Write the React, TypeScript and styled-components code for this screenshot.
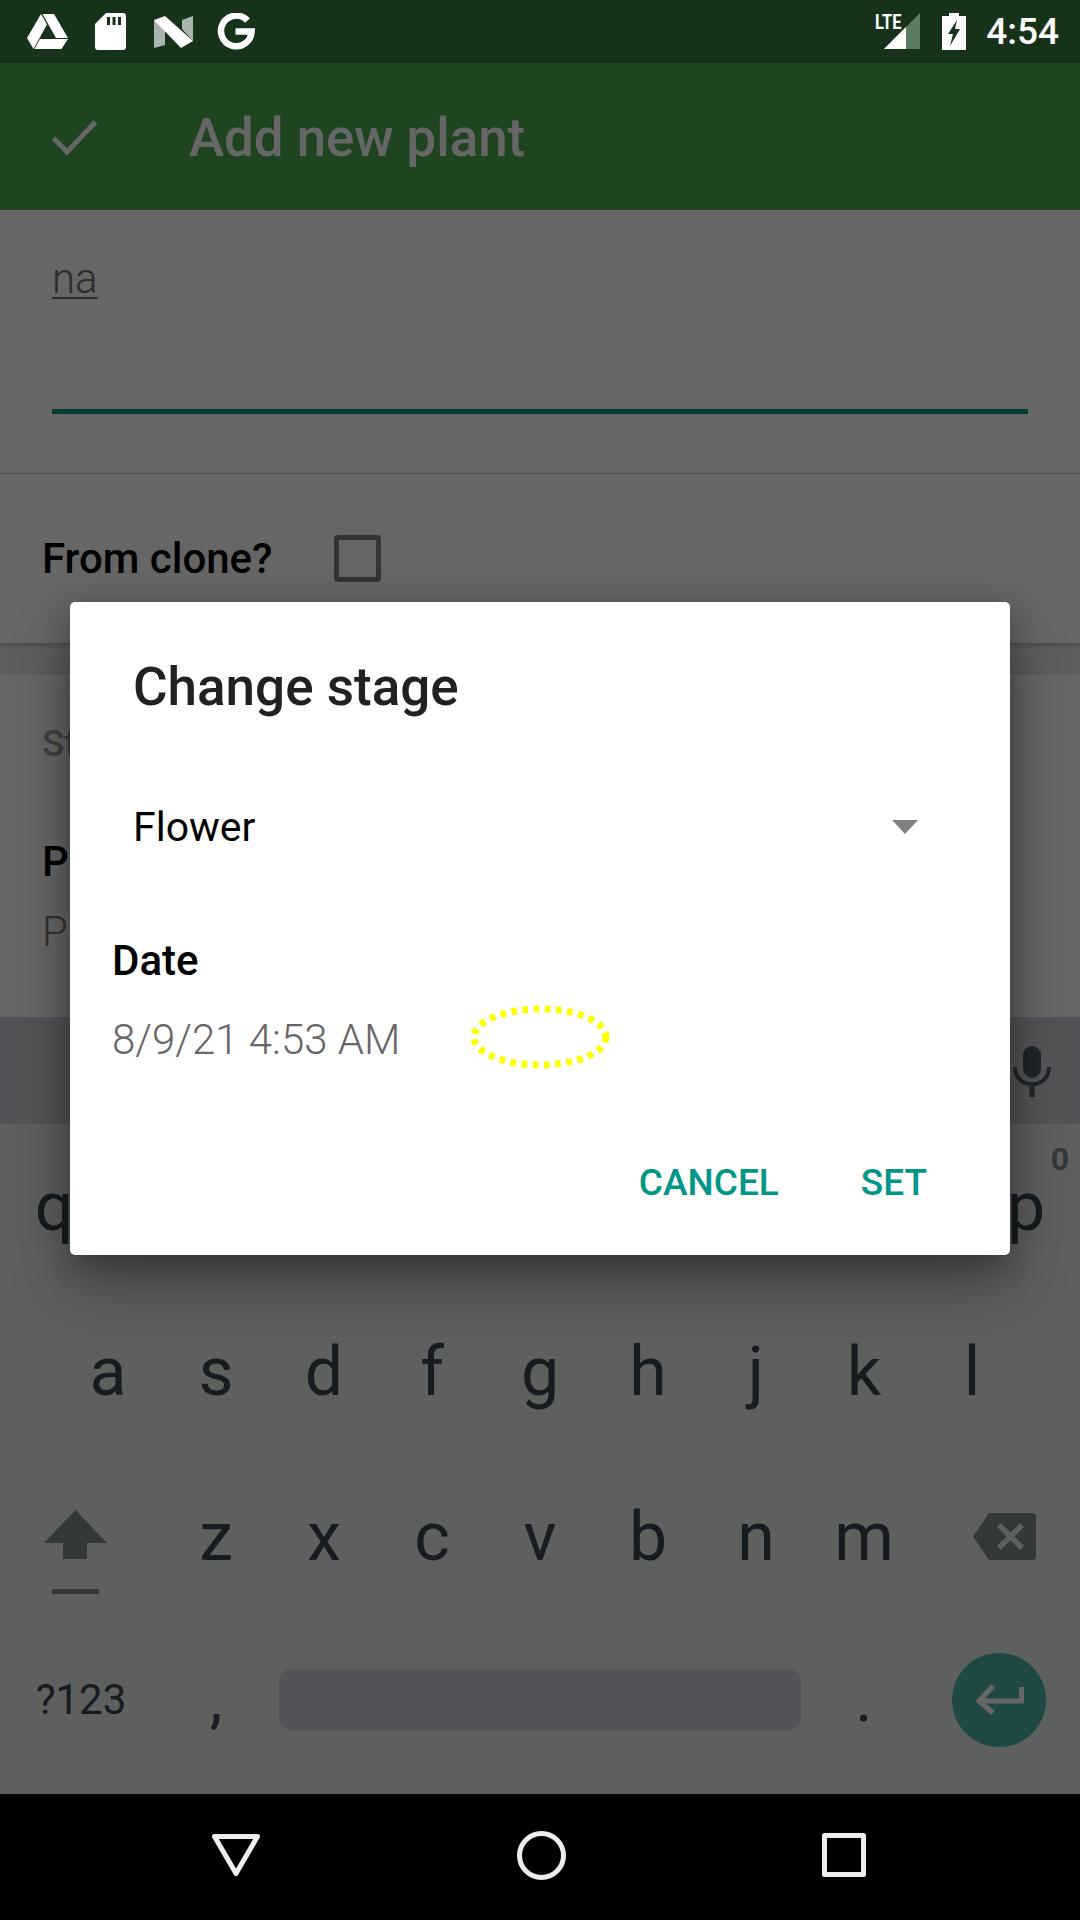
import React from 'react';
import styled, { createGlobalStyle } from 'styled-components';

const Global = createGlobalStyle`
    html, body {
        margin: 0;
        padding: 0;
        background: #000;
    }
    * {
        box-sizing: border-box;
    }
`;

const Screen = styled.div`
    width: 1080px;
    height: 1920px;
    display: flex;
    flex-direction: column;
    overflow: hidden;
    font-family: Roboto, "Liberation Sans", sans-serif;
`;

const StatusBar = styled.div`
    height: 63px;
    flex: none;
    display: flex;
    align-items: center;
    justify-content: space-between;
    padding: 0 21px 0 27px;
    background: #16331a;
`;

const StatusGroup = styled.div`
    display: flex;
    align-items: center;
`;

const StatusIcon = styled.svg<{ $gap?: number }>`
    display: block;
    margin-left: ${props => props.$gap || 0}px;
`;

const SignalWrap = styled.div`
    position: relative;
    width: 45px;
    height: 37px;
`;

const Lte = styled.span`
    position: absolute;
    left: 0;
    top: -1px;
    font-size: 21px;
    line-height: 21px;
    font-weight: 700;
    color: #fff;
    transform: scaleX(0.78);
    transform-origin: left center;
`;

const Clock = styled.span`
    margin-left: 20px;
    font-size: 37px;
    font-weight: 500;
    color: #fff;
`;

const Main = styled.div`
    position: relative;
    flex: 1;
    min-height: 0;
    display: flex;
    flex-direction: column;
    background: #fff;
`;

const Toolbar = styled.div`
    height: 147px;
    flex: none;
    display: flex;
    align-items: center;
    padding: 3px 0 0 52px;
    background: #4caa50;
    color: #fff;
`;

const Title = styled.h1`
    margin: 0 0 0 92px;
    font-size: 52.8px;
    font-weight: 500;
`;

const NameSection = styled.div`
    height: 264px;
    flex: none;
    padding: 44px 52px 0;
    border-bottom: 1px solid #d6d6d6;
`;

const NameValue = styled.div`
    display: inline-block;
    font-size: 42px;
    line-height: 50px;
    font-weight: 300;
    color: #707070;
    text-decoration: underline;
    text-decoration-thickness: 2px;
    text-underline-offset: 4px;
`;

const NameLine = styled.div`
    height: 5px;
    margin-top: 105px;
    background: #009688;
`;

const CloneSection = styled.div`
    height: 169px;
    flex: none;
    display: flex;
    align-items: flex-start;
    padding: 61px 0 0 42px;
    box-shadow: 0 2px 5px rgba(0, 0, 0, 0.25);
    position: relative;
`;

const BoldLabel = styled.div`
    font-size: 42px;
    line-height: 48px;
    font-weight: 500;
    color: #000;
`;

const Checkbox = styled.div`
    width: 47px;
    height: 47px;
    margin-left: 61px;
    border: 5px solid #808080;
    border-radius: 4px;
`;

const Band = styled.div`
    height: 31px;
    flex: none;
    background: #ececec;
    border-bottom: 1px solid #d6d6d6;
`;

const StageSection = styled.div`
    flex: 1;
    padding: 48px 0 0 42px;
`;

const StageLabel = styled.div`
    font-size: 37px;
    line-height: 44px;
    font-weight: 500;
    color: #a0a0a0;
`;

const PlainValue = styled.div`
    margin-top: 21px;
    font-size: 42px;
    line-height: 50px;
    font-weight: 300;
    color: #808080;
`;

const PlainLabel = styled(BoldLabel)`
    margin-top: 72px;
`;

const Keyboard = styled.div`
    height: 777px;
    flex: none;
    display: flex;
    flex-direction: column;
    background: #ecf0f0;
    color: #37474f;
`;

const SuggestionStrip = styled.div`
    height: 107px;
    flex: none;
    display: flex;
    justify-content: flex-end;
    align-items: center;
    padding: 2px 29px 0 0;
    background: #cfd2d9;
`;

const KeyRow = styled.div<{ $columns: string }>`
    height: 165px;
    flex: none;
    display: grid;
    grid-template-columns: ${props => props.$columns};
    align-items: center;
    justify-items: center;
`;

const BottomRow = styled(KeyRow)`
    margin-top: -2px;
`;

const Key = styled.div`
    position: relative;
    width: 100%;
    height: 100%;
    display: flex;
    align-items: center;
    justify-content: center;
    font-size: 68px;
    line-height: 80px;
`;

const KeyHint = styled.span`
    position: absolute;
    right: 11px;
    top: 17px;
    font-size: 32px;
    line-height: 36px;
    font-weight: 700;
    color: #808c8c;
`;

const ShiftKey = styled(Key)`
    padding: 31px 11px 0 0;
`;

const DeleteKey = styled(Key)`
    padding-left: 10px;
`;

const ModeKey = styled(Key)`
    font-size: 42px;
`;

const PunctuationKey = styled(Key)`
    font-size: 64px;
`;

const SpaceBar = styled.div`
    width: 522px;
    height: 61px;
    border-radius: 12px;
    background: #cfd2d9;
`;

const EnterButton = styled.div`
    width: 94px;
    height: 94px;
    display: flex;
    align-items: center;
    justify-content: center;
    border-radius: 50%;
    background: #4db6ac;
`;

const Scrim = styled.div`
    position: absolute;
    inset: 0;
    background: rgba(0, 0, 0, 0.6);
`;

const Dialog = styled.div`
    position: absolute;
    left: 70px;
    top: 539px;
    width: 940px;
    height: 653px;
    display: flex;
    flex-direction: column;
    border-radius: 5px;
    background: #fff;
    box-shadow: 0 30px 60px rgba(0, 0, 0, 0.3), 0 10px 30px rgba(0, 0, 0, 0.25);
`;

const DialogTitle = styled.h2`
    margin: 0;
    padding: 55px 63px 0;
    font-size: 53px;
    line-height: 60px;
    font-weight: 500;
    color: #212121;
`;

const SpinnerRow = styled.div`
    display: flex;
    align-items: center;
    justify-content: space-between;
    margin-top: 85px;
    padding: 0 92px 0 63px;
    font-size: 41px;
    line-height: 50px;
    color: #000;
`;

const Caret = styled.div`
    width: 0;
    height: 0;
    border-left: 13px solid transparent;
    border-right: 13px solid transparent;
    border-top: 14px solid #808080;
`;

const DateBlock = styled.div`
    margin-top: 85px;
    padding-left: 42px;
`;

const DateRow = styled.div`
    display: flex;
    align-items: center;
    margin-top: 20px;
`;

const DateValue = styled.div`
    font-size: 42px;
    line-height: 50px;
    font-weight: 300;
    color: #666;
`;

const EllipseMark = styled(StatusIcon)`
    margin-bottom: 5px;
`;

const Actions = styled.div`
    margin-top: auto;
    display: flex;
    justify-content: flex-end;
    gap: 82px;
    padding: 0 83px 50px 0;
`;

const ActionButton = styled.span`
    font-size: 37px;
    line-height: 44px;
    font-weight: 500;
    color: #009688;
`;

const NavBar = styled.div`
    height: 126px;
    flex: none;
    display: flex;
    align-items: center;
    background: #000;
    padding: 0 214px 4px 212px;
    justify-content: space-between;
`;

const DriveIcon = () => (
    <StatusIcon width="41" height="35" viewBox="0 0 41 35" fill="#fff">
        <path d="M14 0 L20 10.5 L6.5 35 L0 24 Z" />
        <path d="M15.5 0 L27 0 L41 24 L29 24 Z" />
        <path d="M13 25 L41 25 L34.5 35 L7.5 35 Z" />
    </StatusIcon>
);

const SdIcon = () => (
    <StatusIcon $gap={27} width="31" height="37" viewBox="0 0 31 37">
        <path fill="#fff" d="M11 0 H28 a3 3 0 0 1 3 3 V34 a3 3 0 0 1 -3 3 H3 a3 3 0 0 1 -3 -3 V11 Z" />
        <path fill="#16331a" d="M12 4 h3 v8 h-3 Z M17.5 4 h3 v8 h-3 Z M23 4 h3 v8 h-3 Z" />
    </StatusIcon>
);

const NougatIcon = () => (
    <StatusIcon $gap={28} width="39" height="32" viewBox="0 0 39 32">
        <path fill="#aab5ad" d="M0 4 L11 10 V29 L0 32 Z" />
        <path fill="#aab5ad" d="M28 4 L39 0 V25 L28 13 Z" />
        <path fill="#fff" d="M0 4 L11 0 L39 25 L27 32 Z" />
    </StatusIcon>
);

const GoogleIcon = () => (
    <StatusIcon $gap={24} width="38" height="37" viewBox="0 0 38 37">
        <path
            fill="none"
            stroke="#fff"
            strokeWidth="6.5"
            d="M30.5 7.5 A15.3 15.3 0 1 0 34.6 18.5 H18.5"
        />
    </StatusIcon>
);

const SignalIcon = () => (
    <SignalWrap>
        <svg width="45" height="37" viewBox="0 0 45 37" style={{ display: 'block' }}>
            <path fill="#5d7a62" d="M45 0 V36 H9 Z" />
            <path fill="#fff" d="M31 14 V36 H9 Z" />
        </svg>
        <Lte>LTE</Lte>
    </SignalWrap>
);

const BatteryIcon = () => (
    <StatusIcon $gap={22} width="24" height="37" viewBox="0 0 24 37">
        <path fill="#fff" d="M7 0 H17 V3 H24 V37 H0 V3 H7 Z" />
        <path fill="#16331a" d="M15 7 L6 21 H11 L8 33 L18 16 H13 Z" />
    </StatusIcon>
);

const ShiftIcon = () => (
    <svg width="63" height="84" viewBox="0 0 63 84">
        <path fill="#808c8c" d="M31.5 0 L63 33 H43 V49 H19 V33 H0 Z" />
        <rect x="8" y="79" width="47" height="5" fill="#808c8c" />
    </svg>
);

const BackspaceIcon = () => (
    <svg width="63" height="47" viewBox="0 0 63 47">
        <path fill="#808c8c" d="M16 0 H59 a4 4 0 0 1 4 4 V43 a4 4 0 0 1 -4 4 H16 L0 23.5 Z" />
        <path stroke="#ecf0f0" strokeWidth="5.5" d="M26 12 L49 35 M49 12 L26 35" />
    </svg>
);

const EnterIcon = () => (
    <svg width="49" height="31" viewBox="0 0 49 31" fill="none" stroke="#fff" strokeWidth="5">
        <path d="M46.5 3 V17 H5" />
        <path d="M18 2 L4 17 L18 29" />
    </svg>
);

const MicIcon = () => (
    <svg width="38" height="51" viewBox="0 0 38 51">
        <rect x="10" y="0" width="18" height="32" rx="9" fill="#546068" />
        <path d="M2 21 C2 44 36 44 36 21" fill="none" stroke="#546068" strokeWidth="4" />
        <rect x="16.5" y="38" width="5" height="13" fill="#546068" />
    </svg>
);

const FocusEllipse = () => (
    <EllipseMark $gap={70} width="140" height="64" viewBox="0 0 140 64">
        <ellipse
            cx="70"
            cy="32"
            rx="66"
            ry="28"
            fill="none"
            stroke="#ffff00"
            strokeWidth="7"
            strokeDasharray="5.5 5.7"
        />
    </EllipseMark>
);

const ROW_TWO = ['a', 's', 'd', 'f', 'g', 'h', 'j', 'k', 'l'];
const ROW_THREE = ['z', 'x', 'c', 'v', 'b', 'n', 'm'];

const App: React.FC = (): JSX.Element => {
    return (
        <Screen>
            <Global />
            <StatusBar>
                <StatusGroup>
                    <DriveIcon />
                    <SdIcon />
                    <NougatIcon />
                    <GoogleIcon />
                </StatusGroup>
                <StatusGroup>
                    <SignalIcon />
                    <BatteryIcon />
                    <Clock>4:54</Clock>
                </StatusGroup>
            </StatusBar>
            <Main>
                <Toolbar>
                    <svg width="45" height="36" viewBox="0 0 45 36" fill="none" stroke="#fff" strokeWidth="5">
                        <path d="M1.5 18 L15 32 L43.5 2" />
                    </svg>
                    <Title>Add new plant</Title>
                </Toolbar>
                <NameSection>
                    <NameValue>na</NameValue>
                    <NameLine />
                </NameSection>
                <CloneSection>
                    <BoldLabel>From clone?</BoldLabel>
                    <Checkbox />
                </CloneSection>
                <Band />
                <StageSection>
                    <StageLabel>St</StageLabel>
                    <PlainLabel>P</PlainLabel>
                    <PlainValue>P</PlainValue>
                </StageSection>
                <Keyboard>
                    <SuggestionStrip>
                        <MicIcon />
                    </SuggestionStrip>
                    <KeyRow $columns="108px 1fr 108px">
                        <Key>q</Key>
                        <span />
                        <Key>
                            p
                            <KeyHint>0</KeyHint>
                        </Key>
                    </KeyRow>
                    <KeyRow $columns="54px repeat(9, 108px) 54px">
                        <span />
                        {ROW_TWO.map(letter => <Key key={letter}>{letter}</Key>)}
                        <span />
                    </KeyRow>
                    <KeyRow $columns="162px repeat(7, 108px) 162px">
                        <ShiftKey><ShiftIcon /></ShiftKey>
                        {ROW_THREE.map(letter => <Key key={letter}>{letter}</Key>)}
                        <DeleteKey><BackspaceIcon /></DeleteKey>
                    </KeyRow>
                    <BottomRow $columns="162px 108px 540px 108px 162px">
                        <ModeKey>?123</ModeKey>
                        <PunctuationKey>,</PunctuationKey>
                        <SpaceBar />
                        <PunctuationKey>.</PunctuationKey>
                        <EnterButton><EnterIcon /></EnterButton>
                    </BottomRow>
                </Keyboard>
                <Scrim />
                <Dialog>
                    <DialogTitle>Change stage</DialogTitle>
                    <SpinnerRow>
                        <span>Flower</span>
                        <Caret />
                    </SpinnerRow>
                    <DateBlock>
                        <BoldLabel>Date</BoldLabel>
                        <DateRow>
                            <DateValue>8/9/21 4:53 AM</DateValue>
                            <FocusEllipse />
                        </DateRow>
                    </DateBlock>
                    <Actions>
                        <ActionButton>CANCEL</ActionButton>
                        <ActionButton>SET</ActionButton>
                    </Actions>
                </Dialog>
            </Main>
            <NavBar>
                <svg width="48" height="42" viewBox="0 0 48 42" fill="none" stroke="#eee" strokeWidth="5" strokeLinejoin="round">
                    <path d="M2.5 2.5 H45.5 L24 39.5 Z" />
                </svg>
                <svg width="49" height="49" viewBox="0 0 49 49" fill="none" stroke="#eee" strokeWidth="5">
                    <circle cx="24.5" cy="24.5" r="22" />
                </svg>
                <svg width="44" height="44" viewBox="0 0 44 44" fill="none" stroke="#eee" strokeWidth="5" strokeLinejoin="round">
                    <rect x="2.5" y="2.5" width="39" height="39" />
                </svg>
            </NavBar>
        </Screen>
    );
};

export default App;
